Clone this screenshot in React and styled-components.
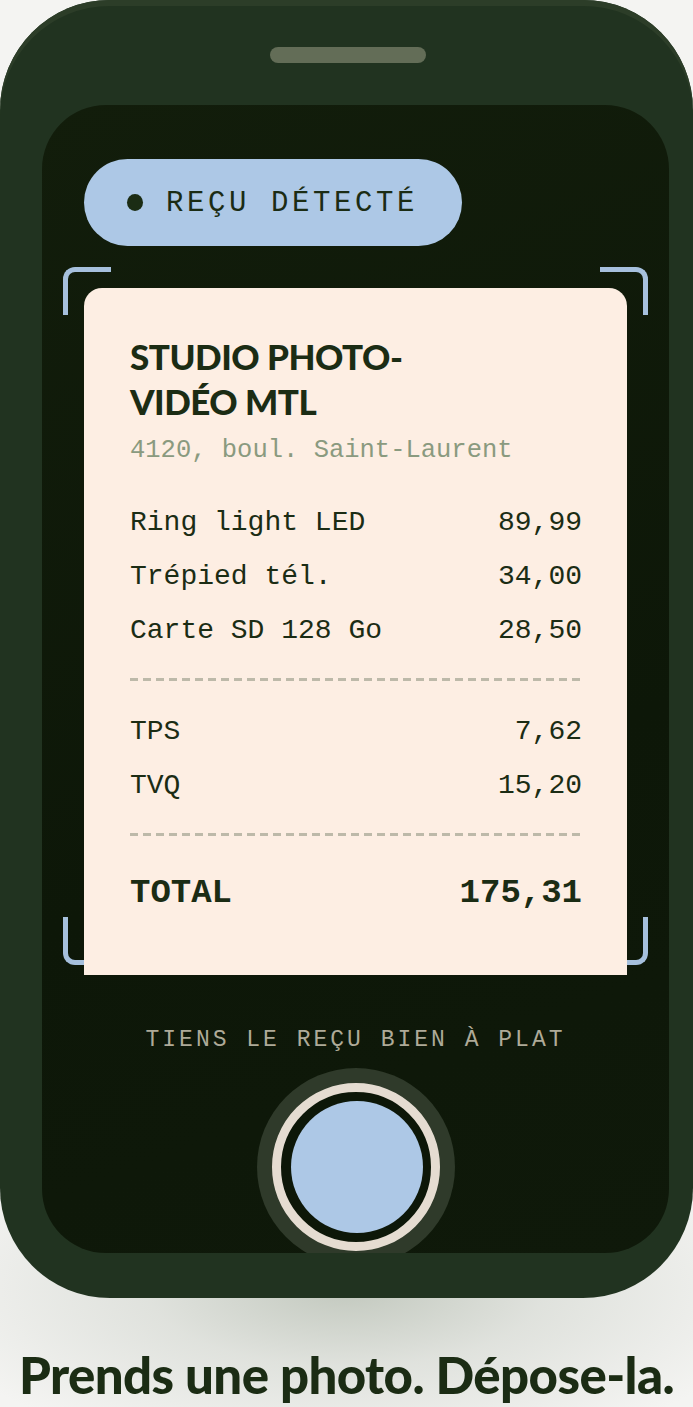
import React from 'react';
import styled, { createGlobalStyle } from 'styled-components';

const GlobalStyle = createGlobalStyle`
  html, body {
    margin: 0;
    padding: 0;
    background: #f4f4f2;
  }
  * { box-sizing: border-box; }
`;

const MONO = `"Liberation Mono", "DejaVu Sans Mono", monospace`;
const SANS = `Lato, "Inter", sans-serif`;

const Page = styled.div`
  width: 693px;
  min-height: 1407px;
  background: radial-gradient(ellipse 440px 170px at 50% 1290px, #c3c9bf 0%, rgba(210, 214, 207, 0.6) 45%, rgba(244, 244, 242, 0) 100%), #f4f4f2;
  display: flex;
  flex-direction: column;
  align-items: center;
`;

const Phone = styled.div`
  width: 693px;
  height: 1298px;
  flex-shrink: 0;
  border-radius: 110px;
  background: #213320;
  box-shadow: inset 0 6px 0 #2c3d28;
  padding: 47px 24px 0 42px;
  display: flex;
  flex-direction: column;
`;

const Speaker = styled.div`
  margin-left: 228px;
  width: 156px;
  height: 16px;
  border-radius: 8px;
  background: #636d57;
  flex-shrink: 0;
`;

const Screen = styled.div`
  margin-top: 42px;
  width: 627px;
  height: 1148px;
  flex-shrink: 0;
  border-radius: 64px;
  background: linear-gradient(160deg, #121d0b 0%, #0d1708 60%, #0f190a 100%);
  padding: 54px 21px 0;
  display: flex;
  flex-direction: column;
  overflow: hidden;
  & > * { flex-shrink: 0; }
`;

const Badge = styled.div`
  align-self: flex-start;
  margin-left: 21px;
  height: 87px;
  padding: 0 44px 0 43px;
  border-radius: 44px;
  background: #adc8e6;
  display: flex;
  align-items: center;
  gap: 23px;
`;

const Dot = styled.span`
  width: 16px;
  height: 17px;
  border-radius: 50%;
  background: #1b2c14;
`;

const BadgeText = styled.span`
  font-family: ${MONO};
  font-size: 29px;
  letter-spacing: 3.6px;
  color: #1b2c14;
  line-height: 1;
  padding-top: 2px;
`;

const Viewfinder = styled.div`
  position: relative;
  margin-top: 21px;
  padding: 21px 21px 0;
  height: 708px;
`;

const Bracket = styled.span`
  position: absolute;
  width: 48px;
  height: 48px;
  border: 0 solid #a6c0dd;
  ${(p) => (p.top ? 'top: 0;' : 'bottom: 10px;')}
  ${(p) => (p.left ? 'left: 0;' : 'right: 0;')}
  ${(p) => (p.top ? 'border-top-width: 5px;' : 'border-bottom-width: 5px;')}
  ${(p) => (p.left ? 'border-left-width: 5px;' : 'border-right-width: 5px;')}
  border-${(p) => (p.top ? 'top' : 'bottom')}-${(p) => (p.left ? 'left' : 'right')}-radius: 12px;
`;

const Card = styled.div`
  position: relative;
  z-index: 1;
  height: 687px;
  background: #fdeee3;
  border-radius: 18px 18px 0 0;
  padding: 46px 45px 0 46px;
  color: #1b2c14;
`;

const Store = styled.h1`
  margin: 0;
  font-family: ${SANS};
  font-weight: 900;
  font-size: 35px;
  line-height: 45px;
  letter-spacing: -0.5px;
  color: #1b2c14;
`;

const Address = styled.div`
  margin-top: 12px;
  font-family: ${MONO};
  font-size: 25.5px;
  line-height: 30px;
  color: #8a9a7f;
`;

const Lines = styled.div`
  margin-top: 29px;
  display: flex;
  flex-direction: column;
`;

const Row = styled.div`
  display: flex;
  justify-content: space-between;
  align-items: center;
  height: 54px;
  margin-top: ${(p) => (p.total ? '7px' : '0')};
  font-family: ${MONO};
  font-size: ${(p) => (p.total ? '34px' : '28px')};
  font-weight: ${(p) => (p.total ? 700 : 400)};
  color: #1b2c14;
`;

const Dashes = styled.div`
  height: 3px;
  margin: 21px 0 23px;
  background-image: linear-gradient(90deg, #bdb9a9 0 8px, transparent 8px 13px);
  background-size: 13px 3px;
`;

const Hint = styled.div`
  margin-top: 52px;
  text-align: center;
  font-family: ${MONO};
  font-size: 23px;
  letter-spacing: 3px;
  color: #aeaa98;
`;

const Shutter = styled.div`
  margin: 15px auto 0;
  width: 198px;
  height: 198px;
  border-radius: 50%;
  background: #2f3a2a;
  display: flex;
  align-items: center;
  justify-content: center;
`;

const ShutterRing = styled.div`
  width: 168px;
  height: 168px;
  border-radius: 50%;
  border: 9px solid #e5dcd1;
  background: #0d1708;
  display: flex;
  align-items: center;
  justify-content: center;
`;

const ShutterButton = styled.div`
  width: 132px;
  height: 132px;
  border-radius: 50%;
  background: #adc8e6;
  margin-left: 2px;
`;

const Caption = styled.h2`
  margin: 49px 0 0;
  font-family: ${SANS};
  font-weight: 900;
  font-size: 51px;
  line-height: 56px;
  letter-spacing: -0.6px;
  color: #1b2c14;
  white-space: nowrap;
`;

const items = [
  ['Ring light LED', '89,99'],
  ['Trépied tél.', '34,00'],
  ['Carte SD 128 Go', '28,50'],
];

const taxes = [
  ['TPS', '7,62'],
  ['TVQ', '15,20'],
];

export default function App() {
  return (
    <Page>
      <GlobalStyle />
      <Phone>
        <Speaker />
        <Screen>
          <Badge>
            <Dot />
            <BadgeText>REÇU DÉTECTÉ</BadgeText>
          </Badge>
          <Viewfinder>
            <Bracket top left />
            <Bracket top />
            <Bracket left />
            <Bracket />
            <Card>
              <Store>
                STUDIO PHOTO-
                <br />
                VIDÉO MTL
              </Store>
              <Address>4120, boul. Saint-Laurent</Address>
              <Lines>
                {items.map(([label, price]) => (
                  <Row key={label}>
                    <span>{label}</span>
                    <span>{price}</span>
                  </Row>
                ))}
                <Dashes />
                {taxes.map(([label, price]) => (
                  <Row key={label}>
                    <span>{label}</span>
                    <span>{price}</span>
                  </Row>
                ))}
                <Dashes />
                <Row total>
                  <span>TOTAL</span>
                  <span>175,31</span>
                </Row>
              </Lines>
            </Card>
          </Viewfinder>
          <Hint>TIENS LE REÇU BIEN À PLAT</Hint>
          <Shutter>
            <ShutterRing>
              <ShutterButton />
            </ShutterRing>
          </Shutter>
        </Screen>
      </Phone>
      <Caption>Prends une photo. Dépose-la.</Caption>
    </Page>
  );
}
